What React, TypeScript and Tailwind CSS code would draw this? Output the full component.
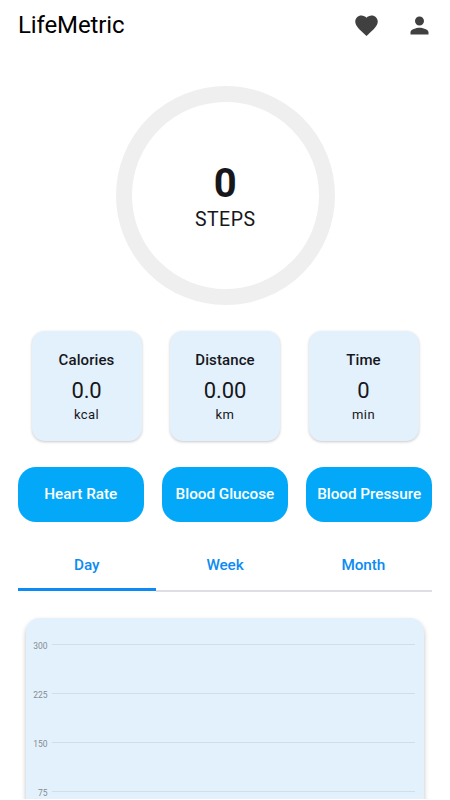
import React from "react";

const stats = [
  { title: "Calories", value: "0.0", unit: "kcal" },
  { title: "Distance", value: "0.00", unit: "km" },
  { title: "Time", value: "0", unit: "min" },
];
const actions = ["Heart Rate", "Blood Glucose", "Blood Pressure"];
const tabs = ["Day", "Week", "Month"];
const ticks = [300, 225, 150, 75];

function Header() {
  return (
    <header className="flex h-[50px] items-center justify-between pr-[17px] pl-[18px]">
      <h1 className="text-[24px] leading-[50px] tracking-[-0.12px] text-black">LifeMetric</h1>
      <div className="flex items-center gap-[26px] text-[#404040]">
        <svg className="size-[27px]" viewBox="0 0 24 24" fill="currentColor">
          <path d="M12 21.35l-1.45-1.32C5.4 15.36 2 12.28 2 8.5 2 5.42 4.42 3 7.5 3c1.74 0 3.41.81 4.5 2.09C13.09 3.81 14.76 3 16.5 3 19.58 3 22 5.42 22 8.5c0 3.78-3.4 6.86-8.55 11.54L12 21.35z" />
        </svg>
        <svg className="size-[27px]" viewBox="0 0 24 24" fill="currentColor">
          <path d="M12 12c2.21 0 4-1.79 4-4s-1.79-4-4-4-4 1.79-4 4 1.79 4 4 4zm0 2c-2.67 0-8 1.34-8 4v2h16v-2c0-2.66-5.33-4-8-4z" />
        </svg>
      </div>
    </header>
  );
}

export default function App() {
  return (
    <div className="flex h-[799px] w-[450px] flex-col overflow-hidden bg-white font-['Roboto',sans-serif] text-[#17171b]">
      <Header />
      <div className="mt-[36px] ml-[116px] flex size-[218.5px] shrink-0 flex-col items-center rounded-full border-[16px] border-[#efefef] pt-[58px]">
        <span className="text-[40px] leading-[48px] font-bold">0</span>
        <span className="text-[19.5px] leading-6 tracking-[0.5px]">STEPS</span>
      </div>
      <div className="mt-[26.5px] ml-[31.5px] flex shrink-0 gap-[28.5px]">
        {stats.map((s) => (
          <div
            key={s.title}
            className="flex h-[110px] w-[110px] flex-col items-center rounded-[13px] bg-[#e3f1fd] pt-[19px] shadow-[0_1px_3px_rgba(0,0,0,0.22)]"
          >
            <span className="text-[15px] leading-5 font-medium tracking-[0.1px]">{s.title}</span>
            <span className="mt-[7px] text-[22px] leading-7 tracking-[-0.1px]">{s.value}</span>
            <span className="text-[13px] leading-5 tracking-[0.4px]">{s.unit}</span>
          </div>
        ))}
      </div>
      <div className="mt-[26px] ml-[17.5px] flex shrink-0 gap-[17.7px]">
        {actions.map((a) => (
          <button
            key={a}
            className="h-[54.5px] w-[126.5px] rounded-[18px] bg-[#03a9f8] pt-px text-center text-[15.3px] font-medium tracking-[-0.02px] whitespace-nowrap text-white"
          >
            {a}
          </button>
        ))}
      </div>
      <nav className="mt-[17px] ml-[17.5px] grid h-[53px] w-[415px] shrink-0 grid-cols-3 text-[15.3px] font-medium tracking-[-0.1px] text-[#0d8bf2]">
        {tabs.map((t, i) => (
          <div key={t} className="flex flex-col">
            <span className="h-10 pt-[13px] text-center leading-[26px]">{t}</span>
            <span className={i === 0 ? "mt-[9.5px] h-[3px] bg-[#0d8bf2]" : "mt-[11px] h-[2px] bg-[#dedee5]"} />
          </div>
        ))}
      </nav>
      <section className="mt-[26px] ml-[25.5px] flex h-[300px] w-[398.5px] shrink-0 flex-col rounded-[14px] bg-[#e3f1fd] pt-[2.5px] shadow-[0_3px_5px_rgba(0,0,0,0.25)]">
        {ticks.map((t) => (
          <div key={t} className="flex h-[49px] shrink-0 items-center pr-[9.5px]">
            <span className="w-[22px] pt-[2px] text-right text-[8.5px] leading-3 text-[#858b90]">{t}</span>
            <span className="ml-[4.5px] h-px flex-1 bg-[#d2dde6]" />
          </div>
        ))}
      </section>
    </div>
  );
}
